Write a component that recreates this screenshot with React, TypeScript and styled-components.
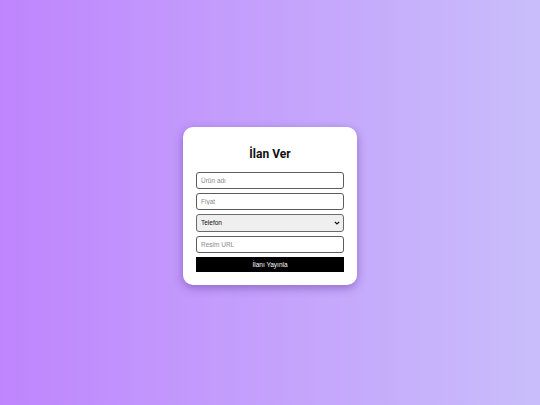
import { styled, createGlobalStyle } from "styled-components";

const GlobalStyle = createGlobalStyle`
  html, body {
    margin: 0;
    padding: 0;
    height: 100%;
  }
  #root {
    height: 100%;
  }
`;

// small chevron for the category dropdown
const chevron =
  "data:image/svg+xml;utf8," +
  encodeURIComponent(
    '<svg xmlns="http://www.w3.org/2000/svg" width="6" height="4" viewBox="0 0 6 4"><path d="M0.8 0.8 L3 3 L5.2 0.8" fill="none" stroke="#111" stroke-width="1.2"/></svg>'
  );

export default function App() {
  return (
    <>
      <GlobalStyle />
      <Page>
        <Card onSubmit={(e) => e.preventDefault()}>
          <Title>İlan Ver</Title>
          <Field type="text" placeholder="Ürün adı" />
          <Field type="text" placeholder="Fiyat" />
          <Select defaultValue="Telefon">
            <option>Telefon</option>
            <option>Bilgisayar</option>
            <option>Tablet</option>
          </Select>
          <Field type="text" placeholder="Resim URL" />
          <Submit type="submit">İlanı Yayınla</Submit>
        </Card>
      </Page>
    </>
  );
}

const Page = styled.div`
  width: 540px;
  height: 405px;
  display: flex;
  justify-content: center;
  align-items: center;
  background: linear-gradient(to right, #bf85fd, #c9befb);
  font-family: "Liberation Sans", Arial, sans-serif;
`;

const Card = styled.form`
  width: 174px;
  box-sizing: border-box;
  padding: 19px 13px 13px;
  margin-top: 6px;
  background: #ffffff;
  border-radius: 10px;
  box-shadow: 0 3px 10px rgba(80, 40, 140, 0.45);
  display: flex;
  flex-direction: column;
  gap: 4px;
`;

const Title = styled.h2`
  margin: 0 0 6px;
  font-family: Roboto, "Liberation Sans", sans-serif;
  font-size: 12px;
  line-height: 16px;
  font-weight: 700;
  color: #111111;
  text-align: center;
`;

const Field = styled.input`
  box-sizing: border-box;
  width: 100%;
  height: 17px;
  padding: 0 4px;
  border: 1px solid #5c5c5c;
  border-radius: 3px;
  font-family: "Liberation Sans", Arial, sans-serif;
  font-size: 6.5px;
  color: #222222;
  outline: none;

  &::placeholder {
    color: #8a8a8a;
  }
`;

const Select = styled.select`
  appearance: none;
  box-sizing: border-box;
  width: 100%;
  height: 18px;
  padding: 0 4px;
  border: 1px solid #6a6a6a;
  border-radius: 3px;
  background: #efefef url("${chevron}") no-repeat right 3px center;
  font-family: "Liberation Sans", Arial, sans-serif;
  font-size: 6.5px;
  color: #111111;
`;

const Submit = styled.button`
  height: 15px;
  width: 100%;
  border: none;
  background: #000000;
  color: #ffffff;
  font-family: "Liberation Sans", Arial, sans-serif;
  font-size: 6.5px;
  cursor: pointer;
`;
